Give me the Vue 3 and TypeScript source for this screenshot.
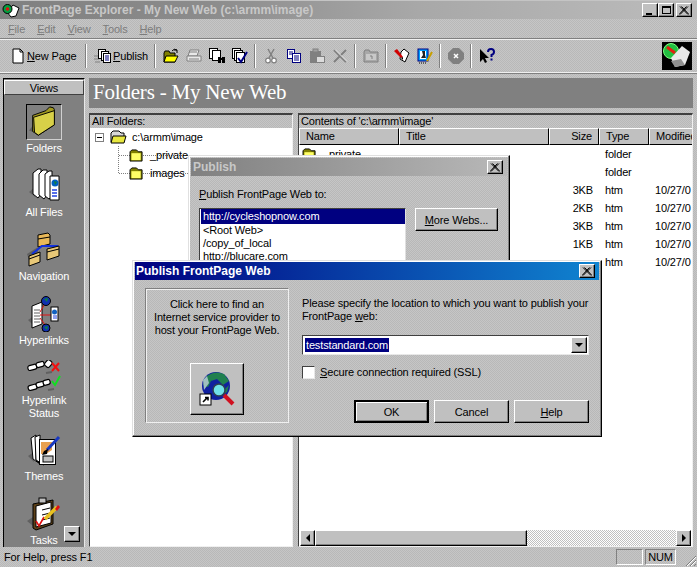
<script setup lang="ts">
interface ToolGroup {
  icons: string[]
}

interface FileRow {
  name: string
  size: string
  type: string
  modified: string
  isFolder?: boolean
}

const menus = ['File', 'Edit', 'View', 'Tools', 'Help']

const toolGroups: ToolGroup[] = [
  { icons: ['t-open', 't-print', 't-find', 't-check'] },
  { icons: ['t-cut', 't-copy', 't-paste', 't-delete'] },
  { icons: ['t-up'] },
  { icons: ['t-brush', 't-image'] },
  { icons: ['t-stop'] },
  { icons: ['t-help'] },
]

const views = [
  { label: ['Folders'], icon: 'v-folders', active: true },
  { label: ['All Files'], icon: 'v-files' },
  { label: ['Navigation'], icon: 'v-nav' },
  { label: ['Hyperlinks'], icon: 'v-links' },
  { label: ['Hyperlink', 'Status'], icon: 'v-status', short: true },
  { label: ['Themes'], icon: 'v-themes' },
  { label: ['Tasks'], icon: 'v-tasks' },
]

// names of the htm rows sit behind the dialogs, so they stay blank
const files: FileRow[] = [
  { name: '_private', size: '', type: 'folder', modified: '', isFolder: true },
  { name: 'images', size: '', type: 'folder', modified: '', isFolder: true },
  { name: '', size: '3KB', type: 'htm', modified: '10/27/0' },
  { name: '', size: '2KB', type: 'htm', modified: '10/27/0' },
  { name: '', size: '3KB', type: 'htm', modified: '10/27/0' },
  { name: '', size: '1KB', type: 'htm', modified: '10/27/0' },
  { name: '', size: '', type: 'htm', modified: '10/27/0' },
]

const publishTargets = ['http://cycleshopnow.com', '<Root Web>', '/copy_of_local', 'http://blucare.com']
</script>

<template>
  <div class="window">
    <svg class="defs" aria-hidden="true">
      <symbol id="close-x" viewBox="0 0 10 9">
        <path d="M1 0.5 L9 8.5 M2.5 0.5 L10 8.5 M9 0.5 L1 8.5 M7.5 0.5 L0 8.5" stroke="#000" stroke-width="1" fill="none" />
      </symbol>
      <symbol id="folder-small" viewBox="0 0 16 14">
        <path d="M1 3 L3 1 H8 L10 3 H14 V13 H1 Z" fill="#808000" stroke="#000" stroke-width="1" />
        <rect x="2.5" y="4.5" width="10" height="7.5" fill="#ffff66" />
      </symbol>
      <symbol id="folder-open" viewBox="0 0 17 14">
        <path d="M1 3 L3 1 H9 L11 3 H14 V12 H1 Z" fill="#d8d8d8" stroke="#000" />
        <path d="M3 6 H16 L14 13 H1 Z" fill="#e8e840" stroke="#000" />
      </symbol>

      <symbol id="t-new" viewBox="0 0 16 16">
        <path d="M3 1 H10 L13 4 V15 H3 Z" fill="#fff" stroke="#000" />
        <path d="M10 1 V4 H13" fill="none" stroke="#000" />
      </symbol>
      <symbol id="t-publish" viewBox="0 0 17 16">
        <path d="M0 8 H4 M0 11 H5 M1 14 H6" stroke="#808080" />
        <rect x="4.5" y="1.5" width="7" height="9" fill="#fff" stroke="#000" />
        <rect x="7.5" y="3.5" width="7" height="9" fill="#fff" stroke="#000" />
        <rect x="9.5" y="5.5" width="7" height="9" fill="#fff" stroke="#000" />
        <path d="M11 8 H15 M11 10 H15 M11 12 H15" stroke="#000080" />
      </symbol>
      <symbol id="t-open" viewBox="0 0 16 16">
        <path d="M1 5 L2 3 H6 L7 5 H12 V14 H1 Z" fill="#808000" stroke="#000" />
        <path d="M3 8 H15 L12 14 H1 Z" fill="#ffff00" stroke="#000" />
        <path d="M9 3 Q11 0 14 2 M14 2 V5 M14 2 H11" fill="none" stroke="#000" />
      </symbol>
      <symbol id="t-print" viewBox="0 0 16 16">
        <path d="M4 2 H13 L11 8 H2 Z" fill="#e8e8e8" stroke="#808080" />
        <path d="M1 8 H15 V13 H1 Z" fill="#e8e8e8" stroke="#808080" />
        <path d="M3 11 H13 M3 4 H11" stroke="#808080" />
      </symbol>
      <symbol id="t-find" viewBox="0 0 16 16">
        <rect x="0.5" y="0.5" width="8" height="10" fill="#fff" stroke="#000" />
        <rect x="3.5" y="2.5" width="8" height="10" fill="#fff" stroke="#000" />
        <rect x="9" y="9" width="3" height="6" fill="#000" />
        <rect x="13" y="9" width="3" height="6" fill="#000" />
        <rect x="11" y="10" width="3" height="2" fill="#000" />
      </symbol>
      <symbol id="t-check" viewBox="0 0 16 16">
        <rect x="0.5" y="0.5" width="8" height="10" fill="#fff" stroke="#000" />
        <rect x="2.5" y="2.5" width="8" height="10" fill="#fff" stroke="#000" />
        <rect x="4.5" y="4.5" width="8" height="10" fill="#fff" stroke="#000" />
        <path d="M6 10 L9 14 L15 4" fill="none" stroke="#000080" stroke-width="2" />
      </symbol>
      <symbol id="t-cut" viewBox="0 0 16 16">
        <path d="M5 1 L10 10 M11 1 L6 10" stroke="#808080" stroke-width="1.5" />
        <circle cx="5" cy="12.5" r="2.3" fill="#fff" stroke="#808080" stroke-width="1.2" />
        <circle cx="11" cy="12.5" r="2.3" fill="#fff" stroke="#808080" stroke-width="1.2" />
      </symbol>
      <symbol id="t-copy" viewBox="0 0 16 16">
        <rect x="1.5" y="1.5" width="7" height="9" fill="#fff" stroke="#000080" />
        <rect x="6.5" y="5.5" width="8" height="9" fill="#fff" stroke="#000080" />
        <path d="M3 4 H7 M3 6 H6 M8 8 H13 M8 10 H13 M8 12 H13" stroke="#000080" />
      </symbol>
      <symbol id="t-paste" viewBox="0 0 16 16">
        <rect x="1" y="3" width="11" height="12" fill="#808080" />
        <rect x="4" y="1" width="5" height="3" fill="#a0a0a0" stroke="#808080" />
        <rect x="7.5" y="8.5" width="8" height="6" fill="#dcdcdc" stroke="#808080" />
      </symbol>
      <symbol id="t-delete" viewBox="0 0 16 16">
        <path d="M2 2 L14 14 M14 2 L2 14" stroke="#808080" stroke-width="2" />
        <path d="M3 1.5 L15 13.5" stroke="#f0f0f0" />
      </symbol>
      <symbol id="t-up" viewBox="0 0 16 16">
        <path d="M1 4 L2 2 H6 L7 4 H15 V14 H1 Z" fill="#a8a8a8" stroke="#808080" />
        <rect x="3" y="6" width="10" height="6" fill="#c8c8c8" />
        <path d="M9 11 V8 H7" fill="none" stroke="#808080" />
      </symbol>
      <symbol id="t-brush" viewBox="0 0 16 16">
        <path d="M7 4 L10 1 L15 5 L11 14 L6 11 Z" fill="#fff" stroke="#000" />
        <path d="M0 3 L3 1 L9 9 L7 10 Z" fill="#d00000" />
        <path d="M7 10 L9 9 L9 12 Z" fill="#000" />
      </symbol>
      <symbol id="t-image" viewBox="0 0 16 16">
        <rect x="1" y="1" width="10" height="12" fill="#00a0ff" stroke="#000080" />
        <rect x="3" y="3" width="6" height="8" fill="#fff" />
        <path d="M5 3 H8 V7 L9 10 H4 L6 7 Z" fill="#202020" />
        <path d="M10 13 L15 4" stroke="#c8a000" stroke-width="2" />
        <path d="M2 15 H10" stroke="#000" stroke-dasharray="1 1" />
      </symbol>
      <symbol id="t-stop" viewBox="0 0 16 16">
        <path d="M5 0 H11 L16 5 V11 L11 16 H5 L0 11 V5 Z" fill="#808080" />
        <path d="M6 6 L10 10 M10 6 L6 10" stroke="#fff" stroke-width="1.5" />
      </symbol>
      <symbol id="t-help" viewBox="0 0 16 16">
        <path d="M1 1 V14 L4 11 L6 15 L8 14 L6 10 H10 Z" fill="#000" />
        <path d="M9 4 Q9 1 12 1 Q15 1 15 4 Q15 6 12.5 7 V9" fill="none" stroke="#000080" stroke-width="2" />
        <rect x="11.5" y="10.5" width="2" height="2" fill="#000080" />
      </symbol>

      <symbol id="v-folders" viewBox="0 0 36 36">
        <path d="M2 27 L7 21 L13 31 Z" fill="#606060" />
        <path d="M6 11 L20 6 L24 2 L28 3 L29 5 L29 21 L12 32 L6 28 Z" fill="#a09820" stroke="#000" />
        <path d="M7 13 L29 6 V21 L12 32 L8 29 Z" fill="#d8d048" stroke="#000" />
      </symbol>
      <symbol id="v-files" viewBox="0 0 36 36">
        <path d="M3 24 L9 19 V29 Z" fill="#606060" />
        <path d="M7 5 L12 1 H15 V26 L12 30 L7 26 Z" fill="#fff" stroke="#000" />
        <path d="M13 6 L17 2 H21 V27 L18 31 L13 27 Z" fill="#fff" stroke="#000" />
        <path d="M19 6 L23 3 H26 V28 L23 31 L19 28 Z" fill="#fff" stroke="#000" />
        <path d="M24 8 H33 V32 H24 Z" fill="#fff" stroke="#000" />
        <circle cx="29" cy="15" r="3.5" fill="#0060c0" />
        <path d="M28 13 L31 14 L29 17 Z" fill="#108040" />
        <path d="M26 22 H31 M26 25 H31 M26 28 H31" stroke="#2040e0" stroke-width="1.5" />
      </symbol>
      <symbol id="v-nav" viewBox="0 0 36 36">
        <path d="M1 22 L12 15 V24 L3 28 Z" fill="#606060" />
        <path d="M12 3 L22 1 L24 3 V12 L12 15 Z" fill="#e8b858" stroke="#000" />
        <path d="M12 7 L24 5" stroke="#000" />
        <path d="M6 22 L16 14 H24 L32 14" fill="none" stroke="#1030e0" stroke-width="2" />
        <path d="M3 24 L14 20 V30 L3 34 Z" fill="#e8c878" stroke="#000" />
        <path d="M3 27 L14 23" stroke="#000" />
        <path d="M21 17 L33 14 V24 L21 28 Z" fill="#e8c878" stroke="#000" />
        <path d="M21 20 L33 17" stroke="#000" />
      </symbol>
      <symbol id="v-links" viewBox="0 0 36 36">
        <path d="M2 24 L8 20 V30 Z" fill="#606060" />
        <path d="M6 10 L16 6 V28 L6 32 Z" fill="#fff" stroke="#000" />
        <path d="M8 14 H14 M8 17 H14 M8 20 H14 M8 23 H14 M8 26 H14" stroke="#606060" />
        <path d="M14 16 L20 6 M14 19 H25 M14 22 L20 30" stroke="#e01010" />
        <circle cx="20" cy="5" r="4.5" fill="#1030b0" stroke="#000" />
        <path d="M18 3 L22 2 L21 6 Z" fill="#108040" />
        <circle cx="20" cy="32" r="4" fill="#1030b0" stroke="#000" />
        <path d="M18 31 L22 30 L21 34 Z" fill="#108040" />
        <rect x="25" y="11" width="7" height="14" fill="#fff" stroke="#000" />
        <circle cx="28.5" cy="16" r="2.5" fill="#1060c0" />
        <path d="M27 20 H31 M27 22 H31" stroke="#2040e0" />
      </symbol>
      <symbol id="v-status" viewBox="0 0 36 32">
        <g fill="#fff" stroke="#000" stroke-width="1.2">
          <rect x="2" y="5" width="9" height="5" rx="2" transform="rotate(-15 6 8)" />
          <rect x="10" y="2" width="8" height="5" rx="2" transform="rotate(-15 14 4)" />
          <rect x="19" y="1" width="7" height="6" rx="2" transform="rotate(-50 22 4)" />
          <rect x="2" y="25" width="9" height="5" rx="2" transform="rotate(-15 6 27)" />
          <rect x="10" y="22" width="8" height="5" rx="2" transform="rotate(-15 14 24)" />
          <rect x="17" y="20" width="7" height="5" rx="2" transform="rotate(-15 20 22)" />
        </g>
        <path d="M26 3 L33 11 M33 3 L26 11" stroke="#f01010" stroke-width="2" />
        <path d="M26 21 L29 25 L34 16" fill="none" stroke="#10e020" stroke-width="2" />
        <path d="M20 13 L26 12 M22 30 L28 29" stroke="#606060" stroke-width="2" />
      </symbol>
      <symbol id="v-themes" viewBox="0 0 36 36">
        <path d="M2 24 L8 20 V30 Z" fill="#606060" />
        <path d="M5 6 L10 3 V28 L14 32 L7 27 Z" fill="#fff" stroke="#000" />
        <path d="M9 5 L14 3 V30 L18 33 L10 28 Z" fill="#fff" stroke="#000" />
        <rect x="13.5" y="7.5" width="16" height="25" fill="#fff" stroke="#000" />
        <path d="M15 10 H26 V18 L20 22 H15 Z" fill="#e8a050" />
        <rect x="17" y="24" width="10" height="6" fill="#c0c0c0" stroke="#000" />
        <path d="M21 18 L33 5" stroke="#1838c0" stroke-width="3" />
        <path d="M18 19 L22 17 L21 22 L16 23 Z" fill="#000" />
      </symbol>
      <symbol id="v-tasks" viewBox="0 0 36 36">
        <path d="M1 25 L7 21 V30 Z" fill="#606060" />
        <path d="M7 8 L27 4 V28 L10 34 L7 32 Z" fill="#5c4018" stroke="#000" />
        <path d="M10 10 L25 6 V27 L10 31 Z" fill="#fff" stroke="#000" />
        <rect x="13" y="2" width="7" height="5" fill="#c0c0c0" stroke="#000" />
        <path d="M16 14 L24 12 M16 19 L24 17 M16 24 L24 22" stroke="#000" />
        <path d="M10 25 L13 30 L18 21" fill="none" stroke="#e01010" stroke-width="1.6" />
        <path d="M19 23 L31 11" stroke="#e8c020" stroke-width="3.5" />
        <path d="M29 13 L32 9 L34 11 L31 15 Z" fill="#e01010" />
      </symbol>
    </svg>

    <div class="title-bar">
      <svg class="app-icon" viewBox="0 0 18 16">
        <path d="M5 10 L11 3 L17 6 L14 14 L9 15 Z" fill="#fff" stroke="#000" />
        <circle cx="5.5" cy="7" r="4.5" fill="#00a040" stroke="#000" />
        <circle cx="5.5" cy="7" r="1.8" fill="#e01010" />
      </svg>
      <span class="title-text">FrontPage Explorer - My New Web (c:\armm\image)</span>
      <div class="window-buttons">
        <button class="win-btn"><span class="min-glyph"></span></button>
        <button class="win-btn"><span class="max-glyph"></span></button>
        <button class="win-btn close-btn"><svg class="x-glyph"><use href="#close-x" /></svg></button>
      </div>
    </div>

    <div class="menu-bar">
      <span v-for="m in menus" :key="m" class="menu-item"><u>{{ m[0] }}</u>{{ m.slice(1) }}</span>
    </div>

    <div class="toolbar">
      <div class="tool text-tool new-page">
        <svg class="tool-icon"><use href="#t-new" /></svg>
        <span><u>N</u>ew Page</span>
      </div>
      <i class="sep"></i>
      <div class="tool text-tool publish">
        <svg class="tool-icon publish-icon"><use href="#t-publish" /></svg>
        <span><u>P</u>ublish</span>
      </div>
      <template v-for="(group, i) in toolGroups" :key="i">
        <i class="sep"></i>
        <div v-for="icon in group.icons" :key="icon" class="tool">
          <svg class="tool-icon"><use :href="'#' + icon" /></svg>
        </div>
      </template>
      <div class="logo">
        <svg viewBox="0 0 30 28">
          <rect width="30" height="28" fill="#000" />
          <circle cx="9" cy="9" r="7.5" fill="#20c040" stroke="#80ff80" />
          <path d="M5 5 L13 11" stroke="#e02010" stroke-width="3" />
          <path d="M9 16 L20 4 L28 10 L23 23 L13 25 Z" fill="#e8e8e8" />
          <path d="M9 19 L19 17 L23 23 L13 25 Z" fill="#909090" />
        </svg>
      </div>
    </div>

    <div class="workspace">
      <aside class="views">
        <div class="views-head">Views</div>
        <div class="views-list">
          <div v-for="v in views" :key="v.icon" class="view-item">
            <div class="view-icon" :class="{ active: v.active, short: v.short }">
              <svg><use :href="'#' + v.icon" /></svg>
            </div>
            <div class="view-label">
              <div v-for="line in v.label" :key="line">{{ line }}</div>
            </div>
          </div>
        </div>
        <button class="views-scroll"><span class="arrow-down"></span></button>
      </aside>

      <section class="content">
        <h1 class="page-head">Folders - My New Web</h1>
        <div class="panes">
          <div class="pane tree-pane">
            <div class="pane-head">All Folders:</div>
            <div class="tree">
              <div class="tree-root">
                <span class="minus"></span>
                <svg class="root-folder"><use href="#folder-open" /></svg>
                <span>c:\armm\image</span>
              </div>
              <div class="tree-children">
                <div class="tree-child">
                  <svg class="child-folder"><use href="#folder-small" /></svg>
                  <span>_private</span>
                </div>
                <div class="tree-child">
                  <svg class="child-folder"><use href="#folder-small" /></svg>
                  <span>images</span>
                </div>
              </div>
            </div>
          </div>

          <div class="pane list-pane">
            <div class="pane-head">Contents of 'c:\armm\image'</div>
            <div class="cols">
              <div class="col c-name">Name</div>
              <div class="col c-title">Title</div>
              <div class="col c-size">Size</div>
              <div class="col c-type">Type</div>
              <div class="col c-mod">Modified</div>
            </div>
            <div class="rows">
              <div v-for="(f, i) in files" :key="i" class="row">
                <div class="c-name cell name-cell">
                  <svg v-if="f.isFolder" class="child-folder"><use href="#folder-small" /></svg>
                  <span>{{ f.name }}</span>
                </div>
                <div class="c-title cell"></div>
                <div class="c-size cell">{{ f.size }}</div>
                <div class="c-type cell">{{ f.type }}</div>
                <div class="c-mod cell">{{ f.modified }}</div>
              </div>
            </div>
            <div class="h-scroll">
              <button class="scroll-btn"><span class="arrow-left"></span></button>
              <div class="thumb"></div>
              <div class="track"></div>
              <button class="scroll-btn"><span class="arrow-right"></span></button>
            </div>
          </div>
        </div>
      </section>
    </div>

    <div class="status-bar">
      <span class="status-text">For Help, press F1</span>
      <span class="status-cell blank"></span>
      <span class="status-cell num">NUM</span>
      <svg class="grip" viewBox="0 0 12 12">
        <path d="M2 12 L12 2 M6 12 L12 6 M10 12 L12 10" stroke="#808080" fill="none" />
        <path d="M3 12 L12 3 M7 12 L12 7" stroke="#fff" fill="none" />
      </svg>
    </div>

    <!-- dialog behind -->
    <div class="dialog back-dialog">
      <div class="dlg-title inactive">
        <span>Publish</span>
        <button class="win-btn dlg-close"><svg class="x-glyph"><use href="#close-x" /></svg></button>
      </div>
      <div class="back-body">
        <div class="back-label"><u>P</u>ublish FrontPage Web to:</div>
        <div class="back-row">
          <div class="listbox">
            <div v-for="(t, i) in publishTargets" :key="t" class="list-row" :class="{ selected: i === 0 }">{{ t }}</div>
          </div>
          <button class="btn more-btn"><u>M</u>ore Webs...</button>
        </div>
      </div>
    </div>

    <!-- dialog in front -->
    <div class="dialog front-dialog">
      <div class="dlg-title active-title">
        <span>Publish FrontPage Web</span>
        <button class="win-btn dlg-close"><svg class="x-glyph"><use href="#close-x" /></svg></button>
      </div>
      <div class="front-body">
        <div class="isp-box">
          <p>Click here to find an<br />Internet service provider to<br />host your FrontPage Web.</p>
          <button class="isp-btn">
            <svg viewBox="0 0 36 36" width="36" height="36">
              <circle cx="17" cy="15" r="14" fill="#1020a0" />
              <path d="M8 5 Q16 -1 25 3 L30 10 L24 14 L18 8 L12 10 L9 16 L4 14 Z" fill="#208050" />
              <path d="M4 9 L8 5 L10 12 L5 19 Z" fill="#a0c0c0" />
              <path d="M22 25 L28 21 L30 14 L24 20 Z" fill="#208050" />
              <path d="M25 24 L34 33" stroke="#d01020" stroke-width="4" />
              <circle cx="20" cy="19" r="6" fill="#70e0e8" stroke="#304050" stroke-width="1.5" />
              <rect x="1" y="23" width="11" height="11" fill="#fff" stroke="#000" />
              <path d="M4 31 L8 27 M6 26.5 H9 V29.5" stroke="#000" stroke-width="1.6" fill="none" />
            </svg>
          </button>
        </div>
        <div class="form-col">
          <p class="prompt">Please specify the location to which you want to publish your<br />FrontPage <u>w</u>eb:</p>
          <div class="combo">
            <span class="combo-value">teststandard.com</span>
            <button class="combo-btn"><span class="arrow-down"></span></button>
          </div>
          <label class="check-row">
            <span class="check"></span>
            <span><u>S</u>ecure connection required (SSL)</span>
          </label>
          <div class="actions">
            <button class="btn default-btn">OK</button>
            <button class="btn">Cancel</button>
            <button class="btn"><u>H</u>elp</button>
          </div>
        </div>
      </div>
    </div>
  </div>
</template>

<style scoped>
.defs {
  display: none;
}

.window {
  position: relative;
  width: 697px;
  height: 567px;
  overflow: hidden;
  display: flex;
  flex-direction: column;
  font-family: 'Liberation Sans', Arial, sans-serif;
  font-size: 11px;
  letter-spacing: -0.15px;
  color: #000;
  background: repeating-conic-gradient(#c6c6c6 0 25%, #b8b8b8 0 50%) 0 0 / 2px 2px;
}

button {
  font: inherit;
  letter-spacing: inherit;
  color: inherit;
  padding: 0;
  cursor: default;
}

/* title bar */
.title-bar {
  height: 19px;
  flex: none;
  display: flex;
  align-items: center;
  padding: 0 5px 0 2px;
  border-top: 1px solid #c4c4c4;
  box-sizing: border-box;
  background: linear-gradient(90deg, #808080 0%, #8c8c8c 30%, #a8a8a8 60%, #bcbcbc 100%);
}

.app-icon {
  width: 18px;
  height: 16px;
  flex: none;
}

.title-text {
  margin-left: 2px;
  color: #c8c8c8;
  font-weight: 700;
  font-size: 12px;
  letter-spacing: 0;
  white-space: nowrap;
}

.window-buttons {
  margin-left: auto;
  display: flex;
}

.win-btn {
  width: 16px;
  height: 14px;
  box-sizing: border-box;
  display: flex;
  align-items: center;
  justify-content: center;
  background: #c0c0c0;
  border: 1px solid;
  border-color: #fff #000 #000 #fff;
  box-shadow: inset -1px -1px 0 #808080;
}

.close-btn {
  margin-left: 2px;
}

.x-glyph {
  width: 10px;
  height: 9px;
}

.min-glyph {
  width: 6px;
  height: 2px;
  background: #000;
  margin-top: 7px;
  margin-right: 3px;
}

.max-glyph {
  width: 9px;
  height: 8px;
  box-sizing: border-box;
  border: 1px solid #000;
  border-top-width: 2px;
}

/* menu */
.menu-bar {
  height: 20px;
  flex: none;
  display: flex;
  align-items: center;
  padding-left: 8px;
  gap: 12px;
  color: #7c7c7c;
}

/* toolbar */
.toolbar {
  height: 34px;
  flex: none;
  box-sizing: border-box;
  display: flex;
  align-items: center;
  padding: 0 5px 0 8px;
  border-top: 1px solid #f0f0f0;
  border-bottom: 1px solid #f0f0f0;
  box-shadow: 0 -1px 0 #808080, 0 1px 0 #808080;
  margin-bottom: 5px;
}

.tool {
  width: 23px;
  height: 24px;
  flex: none;
  display: flex;
  align-items: center;
  justify-content: center;
}

.tool-icon {
  width: 16px;
  height: 16px;
  flex: none;
}

.text-tool {
  justify-content: flex-start;
  padding-left: 2px;
  box-sizing: border-box;
  white-space: nowrap;
}

.new-page {
  width: 74px;
  gap: 1px;
}

.publish {
  width: 61px;
  gap: 2px;
  padding-left: 4px;
}

.publish-icon {
  width: 17px;
}

.sep {
  flex: none;
  width: 2px;
  height: 24px;
  margin: 0 3px;
  background: linear-gradient(90deg, #808080 50%, #fff 50%);
}

.logo {
  margin-left: auto;
  width: 30px;
  height: 28px;
}

.logo svg {
  display: block;
  width: 30px;
  height: 28px;
}

/* views */
.workspace {
  flex: 1;
  min-height: 0;
  display: flex;
  padding-left: 3px;
  padding-right: 4px;
}

.views {
  position: relative;
  width: 82px;
  flex: none;
  box-sizing: border-box;
  overflow: hidden;
  display: flex;
  flex-direction: column;
  background: #808080;
  border: 1px solid #000;
  border-bottom: none;
  border-right-color: #e8e8e8;
}

.views-head {
  height: 15px;
  margin: 1px 0 0;
  flex: none;
  text-align: center;
  line-height: 14px;
  box-sizing: border-box;
  background: #c0c0c0;
  border: 1px solid;
  border-color: #fff #404040 #404040 #fff;
}

.views-list {
  padding-top: 9px;
  display: flex;
  flex-direction: column;
}

.view-item {
  display: flex;
  flex-direction: column;
  align-items: center;
  padding-bottom: 13px;
}

.view-icon {
  width: 36px;
  height: 36px;
  box-sizing: border-box;
  margin-bottom: 2px;
}

.view-icon svg {
  display: block;
  width: 100%;
  height: 100%;
}

.view-icon.active {
  border: 1px solid;
  border-color: #000 #d0d0d0 #d0d0d0 #000;
}

.view-icon.short {
  height: 32px;
}

.view-label {
  color: #fff;
  text-align: center;
  line-height: 13px;
}

.view-item:nth-child(5) {
  padding-bottom: 12px;
}

.views-scroll {
  position: absolute;
  right: 4px;
  bottom: 5px;
  width: 16px;
  height: 16px;
  display: flex;
  align-items: center;
  justify-content: center;
  background: #c0c0c0;
  border: 1px solid;
  border-color: #fff #000 #000 #fff;
  box-shadow: inset -1px -1px 0 #808080;
}

.arrow-down {
  width: 0;
  height: 0;
  border: 4px solid transparent;
  border-top-color: #000;
  border-bottom: none;
}

.arrow-left {
  width: 0;
  height: 0;
  border: 4px solid transparent;
  border-right-color: #000;
  border-left: none;
}

.arrow-right {
  width: 0;
  height: 0;
  border: 4px solid transparent;
  border-left-color: #000;
  border-right: none;
}

/* content */
.content {
  flex: 1;
  min-width: 0;
  margin-left: 4px;
  display: flex;
  flex-direction: column;
}

.page-head {
  height: 30px;
  flex: none;
  margin: 0 0 5px;
  padding-left: 4px;
  background: #808080;
  color: #fff;
  font-family: 'Liberation Serif', 'Times New Roman', serif;
  font-size: 21px;
  letter-spacing: -0.2px;
  font-weight: 400;
  line-height: 29px;
}

.panes {
  flex: 1;
  min-height: 0;
  display: flex;
  gap: 5px;
}

.pane {
  box-sizing: border-box;
  display: flex;
  flex-direction: column;
  min-width: 0;
  border: 1px solid;
  border-color: #404040 #f0f0f0 #f0f0f0 #404040;
  border-top-width: 2px;
}

.tree-pane {
  width: 204px;
  flex: none;
}

.list-pane {
  flex: 1;
}

.pane-head {
  height: 13px;
  flex: none;
  padding-left: 2px;
  line-height: 13px;
  white-space: nowrap;
}

.tree {
  flex: 1;
  background: #fff;
  padding-left: 5px;
}

.tree-root {
  display: flex;
  align-items: center;
  height: 18px;
}

.minus {
  position: relative;
  width: 9px;
  height: 9px;
  box-sizing: border-box;
  border: 1px solid #808080;
  margin-right: 6px;
  flex: none;
}

.minus::after {
  content: '';
  position: absolute;
  left: 1px;
  top: 3px;
  width: 5px;
  height: 1px;
  background: #000;
}

.root-folder {
  width: 17px;
  height: 14px;
  margin-right: 5px;
  flex: none;
}

.child-folder {
  width: 15px;
  height: 13px;
  margin-right: 6px;
  flex: none;
}

.tree-children {
  margin-left: 23px;
  border-left: 1px dotted #808080;
  height: 27px;
}

.tree-child {
  display: flex;
  align-items: center;
  height: 18px;
  padding-left: 10px;
  white-space: nowrap;
  background: linear-gradient(90deg, #808080 50%, transparent 50%) 0 9px / 2px 1px repeat-x;
}

.cols {
  height: 17px;
  flex: none;
  display: flex;
  overflow: hidden;
}

.col {
  box-sizing: border-box;
  padding: 0 6px;
  line-height: 14px;
  background: #c0c0c0;
  border: 1px solid;
  border-color: #fff #000 #000 #fff;
  flex: none;
}

.c-name {
  width: 100px;
  flex: none;
}

.c-title {
  width: 150px;
  flex: none;
}

.c-size {
  width: 50px;
  flex: none;
  text-align: right;
}

.c-type {
  width: 50px;
  flex: none;
}

.c-mod {
  width: 60px;
  flex: none;
  overflow: hidden;
  white-space: nowrap;
}

.rows {
  flex: 1;
  min-height: 0;
  background: #fff;
  overflow: hidden;
}

.row {
  display: flex;
  height: 18px;
  align-items: center;
}

.cell {
  box-sizing: border-box;
  padding: 0 6px;
  white-space: nowrap;
}

.name-cell {
  display: flex;
  align-items: center;
  padding-left: 3px;
}

.h-scroll {
  height: 16px;
  flex: none;
  display: flex;
  background: #fff;
  padding: 0 1px;
}

.scroll-btn {
  width: 15px;
  height: 16px;
  flex: none;
  display: flex;
  align-items: center;
  justify-content: center;
  background: #c0c0c0;
  border: 1px solid;
  border-color: #fff #000 #000 #fff;
  box-shadow: inset -1px -1px 0 #808080;
}

.thumb {
  width: 212px;
  flex: none;
  box-sizing: border-box;
  background: #c0c0c0;
  border: 1px solid;
  border-color: #fff #000 #000 #fff;
  box-shadow: inset -1px -1px 0 #808080;
}

.track {
  flex: 1;
  background: repeating-conic-gradient(#c0c0c0 0 25%, #fff 0 50%) 0 0 / 2px 2px;
}

/* status */
.status-bar {
  height: 20px;
  flex: none;
  display: flex;
  align-items: center;
  padding: 0 1px 0 4px;
  position: relative;
}

.status-text {
  margin-right: auto;
}

.status-cell {
  height: 16px;
  box-sizing: border-box;
  line-height: 15px;
  border: 1px solid;
  border-color: #808080 #fff #fff #808080;
  text-align: center;
}

.blank {
  width: 27px;
  margin-right: 2px;
}

.num {
  width: 31px;
  margin-right: 20px;
}

.grip {
  position: absolute;
  right: 1px;
  bottom: 1px;
  width: 12px;
  height: 12px;
}

/* dialogs */
.dialog {
  position: absolute;
  box-sizing: border-box;
  background: repeating-conic-gradient(#c6c6c6 0 25%, #b8b8b8 0 50%) 0 0 / 2px 2px;
  border: 1px solid;
  border-color: #e0e0e0 #000 #000 #e0e0e0;
  box-shadow: inset -1px -1px 0 #808080, inset 1px 1px 0 #fff;
  padding: 2px;
}

.back-dialog {
  left: 188px;
  top: 155px;
  width: 322px;
  height: 125px;
}

.front-dialog {
  left: 132px;
  top: 260px;
  width: 470px;
  height: 177px;
}

.dlg-title {
  height: 18px;
  display: flex;
  align-items: center;
  justify-content: space-between;
  padding: 0 4px 0 2px;
  font-weight: 700;
  font-size: 12px;
  letter-spacing: 0;
}

.dlg-title.inactive {
  color: #c8c8c8;
  background: linear-gradient(90deg, #808080, #b8b8b8);
}

.dlg-title.active-title {
  color: #fff;
  margin-top: -1px;
  padding-left: 1px;
  background: linear-gradient(90deg, #000080, #1084d0);
}

.back-body {
  padding: 11px 0 0 8px;
}

.back-label {
  line-height: 14px;
}

.back-row {
  display: flex;
  align-items: flex-start;
  gap: 9px;
  margin-top: 7px;
}

.listbox {
  width: 207px;
  height: 70px;
  box-sizing: border-box;
  padding: 0 0 0 1px;
  background: #fff;
  border: 1px solid;
  border-color: #404040 #e0e0e0 #e0e0e0 #404040;
}

.list-row {
  height: 13px;
  line-height: 13px;
  padding-left: 2px;
  white-space: nowrap;
}

.list-row.selected {
  height: 15px;
  line-height: 15px;
  background: #000080;
  color: #fff;
}

.btn {
  width: 75px;
  height: 23px;
  box-sizing: border-box;
  background: #c0c0c0;
  border: 1px solid;
  border-color: #fff #000 #000 #fff;
  box-shadow: inset -1px -1px 0 #808080;
}

.more-btn {
  width: 83px;
}

.front-body {
  display: flex;
  padding: 8px 0 0 10px;
}

.isp-box {
  width: 144px;
  height: 135px;
  flex: none;
  box-sizing: border-box;
  border: 1px solid;
  border-color: #808080 #f0f0f0 #f0f0f0 #808080;
  box-shadow: inset 1px 1px 0 #f0f0f0;
  display: flex;
  flex-direction: column;
  align-items: center;
}

.isp-box p {
  margin: 9px 0 0;
  text-align: center;
  line-height: 13px;
}

.isp-btn {
  width: 54px;
  height: 52px;
  margin-top: 26px;
  display: flex;
  align-items: center;
  justify-content: center;
  background: #c0c0c0;
  border: 1px solid;
  border-color: #fff #000 #000 #fff;
  box-shadow: inset -1px -1px 0 #808080;
}

.form-col {
  flex: 1;
  min-width: 0;
  margin-left: 13px;
  margin-right: 10px;
  display: flex;
  flex-direction: column;
}

.prompt {
  margin: 9px 0 0;
  line-height: 13px;
  white-space: nowrap;
}

.combo {
  margin-top: 12px;
  height: 20px;
  box-sizing: border-box;
  display: flex;
  align-items: center;
  padding: 0 1px 0 2px;
  background: #fff;
  border: 1px solid;
  border-color: #404040 #e8e8e8 #e8e8e8 #404040;
}

.combo-value {
  background: #000080;
  color: #fff;
  padding: 0 1px;
  line-height: 14px;
}

.combo-btn {
  margin-left: auto;
  width: 16px;
  height: 16px;
  display: flex;
  align-items: center;
  justify-content: center;
  background: #c0c0c0;
  border: 1px solid;
  border-color: #fff #000 #000 #fff;
  box-shadow: inset -1px -1px 0 #808080;
}

.check-row {
  display: flex;
  align-items: center;
  gap: 5px;
  margin-top: 10px;
  height: 14px;
}

.check {
  width: 13px;
  height: 13px;
  box-sizing: border-box;
  background: #fff;
  border: 1px solid;
  border-color: #404040 #e8e8e8 #e8e8e8 #404040;
}

.actions {
  display: flex;
  justify-content: flex-end;
  gap: 5px;
  margin-top: 21px;
}

.default-btn {
  border: 2px solid #000;
  box-shadow: inset 1px 1px 0 #fff, inset -1px -1px 0 #808080;
}
</style>

<style>
html,
body {
  margin: 0;
  background: #c0c0c0;
}
</style>
